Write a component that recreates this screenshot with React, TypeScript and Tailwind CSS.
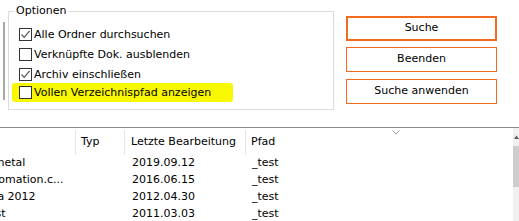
import React from 'react';

const font = { fontFamily: '"DejaVu Sans", Verdana, sans-serif' };

function Check({ checked }: { checked: boolean }) {
  return (
    <span className="flex h-[13px] w-[13px] shrink-0 items-center justify-center border border-[#333333] bg-white">
      {checked && (
        <svg width="11" height="11" viewBox="0 0 11 11" fill="none">
          <path d="M1.5 5.5L4.2 8.3L9.5 2" stroke="#5a5a5a" strokeWidth="1.2" />
        </svg>
      )}
    </span>
  );
}

const options = [
  { label: 'Alle Ordner durchsuchen', checked: true },
  { label: 'Verknüpfte Dok. ausblenden', checked: false },
  { label: 'Archiv einschließen', checked: true },
];

// list is scrolled horizontally, so the name column starts left of the window
const rows = [
  { name: 'Sheetmetal', date: '2019.09.12' },
  { name: 'ProAutomation.c...', date: '2016.06.15' },
  { name: 'Summa 2012', date: '2012.04.30' },
  { name: 'Feldtest', date: '2011.03.03' },
];

export default function App() {
  return (
    <div className="h-[221px] w-[519px] overflow-hidden bg-white text-[11px] text-black" style={font}>
      {/* Top: options + buttons */}
      <div className="flex h-[127px]">
        <div className="ml-[3px] mt-[22px] h-[78px] w-[2px] bg-[#a9a9a9]" />

        <fieldset className="ml-[3px] mt-[4px] h-[106px] w-[326px] border border-[#dcdcdc] pl-[5px]">
          <legend className="px-[2px] leading-[14px]">Optionen</legend>
          <div className="mt-[6px] flex flex-col">
            {options.map((o) => (
              <label key={o.label} className="ml-[5px] flex h-[20px] items-center gap-[2px]">
                <Check checked={o.checked} />
                <span className="leading-[13px]">{o.label}</span>
              </label>
            ))}
            <label className="-ml-[2px] -mt-[1px] flex h-[19px] w-[221px] items-center gap-[2px] rounded-[3px] bg-[#f8f800] pl-[7px]">
              <Check checked={false} />
              <span className="leading-[13px]">Vollen Verzeichnispfad anzeigen</span>
            </label>
          </div>
        </fieldset>

        <div className="ml-[12px] mt-[16px] flex flex-col">
          <button className="h-[25px] w-[151px] border-2 border-[#f26b21] bg-white">Suche</button>
          <button className="mt-[6px] h-[25px] w-[151px] border border-[#f26b21] bg-white">Beenden</button>
          <button className="mt-[7px] h-[25px] w-[151px] border border-[#f26b21] bg-white">Suche anwenden</button>
        </div>
      </div>

      {/* List */}
      <div className="flex border-t border-[#8c8c8c]">
        <div className="flex-1 overflow-hidden">
          <div className="flex h-[27px] items-center pt-[2px]">
            <div className="h-full w-[76px] border-r border-[#e5e5e5]" />
            <div className="flex h-full w-[49px] items-center border-r border-[#e5e5e5] pl-[5px]">Typ</div>
            <div className="flex h-full w-[121px] items-center border-r border-[#e5e5e5] pl-[6px]">Letzte Bearbeitung</div>
            <div className="relative flex h-full flex-1 items-center pl-[5px]">
              Pfad
              <svg className="absolute left-[146px] top-0" width="8" height="5" viewBox="0 0 8 5" fill="none">
                <path d="M0.5 0.5L4 4L7.5 0.5" stroke="#9a9a9a" strokeWidth="1" />
              </svg>
            </div>
          </div>
          {rows.map((r) => (
            <div key={r.date} className="flex h-[17px] items-center">
              <div className="w-[77px] overflow-hidden whitespace-nowrap">
                <span className="-ml-[38px] block">{r.name}</span>
              </div>
              <div className="w-[49px]" />
              <div className="w-[121px] pl-[6px]">{r.date}</div>
              <div className="flex-1 pl-[5px]">_test</div>
            </div>
          ))}
        </div>

        {/* Vertical scrollbar (clipped) */}
        <div className="flex h-[94px] w-[6px] flex-col bg-[#f0f0f0]">
          <div className="flex h-[18px] items-center pl-[1px]">
            <svg width="5" height="4" viewBox="0 0 5 4">
              <path d="M0 4L2.5 0.5L5 4Z" fill="#606060" />
            </svg>
          </div>
          <div className="h-[41px] bg-[#cdcdcd]" />
        </div>
      </div>
    </div>
  );
}
